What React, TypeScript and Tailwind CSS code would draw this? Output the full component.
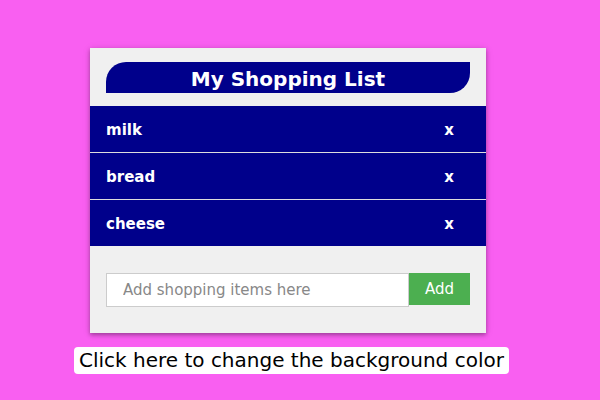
import { useState } from "react";

const colors = ["bg-[#f95ff1]", "bg-[#5cc8f9]", "bg-[#f9d65c]"];

export default function App() {
  const [items, setItems] = useState(["milk", "bread", "cheese"]);
  const [text, setText] = useState("");
  const [color, setColor] = useState(0);

  const addItem = () => {
    if (text.trim()) {
      setItems([...items, text.trim()]);
      setText("");
    }
  };

  return (
    <main
      className={`min-h-screen pt-12 pr-[19%] pl-[15%] font-['DejaVu_Sans',sans-serif] ${colors[color]}`}
    >
      <section className="bg-[#f0f0f0] shadow-[0_2px_4px_rgba(0,0,0,0.3),0_1px_8px_rgba(0,0,0,0.12)]">
        <header className="px-4 pt-3.5 pb-[13px]">
          <h1 className="rounded-tl-[20px] rounded-br-[20px] bg-[#00008b] pt-[3px] text-center text-xl leading-7 font-bold text-white">
            My Shopping List
          </h1>
        </header>
        <ul className="divide-y divide-[#ddd] bg-[#00008b] text-[15px] font-bold text-white">
          {items.map((item, i) => (
            <li key={item + i} className="flex h-[47px] items-center justify-between pt-0.5 pl-4 last:h-[46px]">
              <span>{item}</span>
              <button
                type="button"
                aria-label={`Remove ${item}`}
                className="px-8 py-3"
                onClick={() => setItems(items.filter((_, j) => j !== i))}
              >
                x
              </button>
            </li>
          ))}
        </ul>
        <div className="flex px-4 pt-[27px] pb-[26px]">
          <input
            type="text"
            aria-label="Add shopping items here"
            placeholder="Add shopping items here"
            value={text}
            onChange={(e) => setText(e.target.value)}
            className="h-[34px] min-w-0 flex-1 border border-[#ccc] bg-white px-4 text-[15px] placeholder:text-[#888]"
          />
          <button
            type="button"
            onClick={addItem}
            className="h-8 bg-[#4caf50] px-4 text-[15px] text-white"
          >
            Add
          </button>
        </div>
      </section>
      <button
        type="button"
        onClick={() => setColor((color + 1) % colors.length)}
        className="mt-3.5 -ml-4 rounded bg-white px-[5px] text-xl leading-[27px] whitespace-nowrap text-black"
      >
        Click here to change the background color
      </button>
    </main>
  );
}
